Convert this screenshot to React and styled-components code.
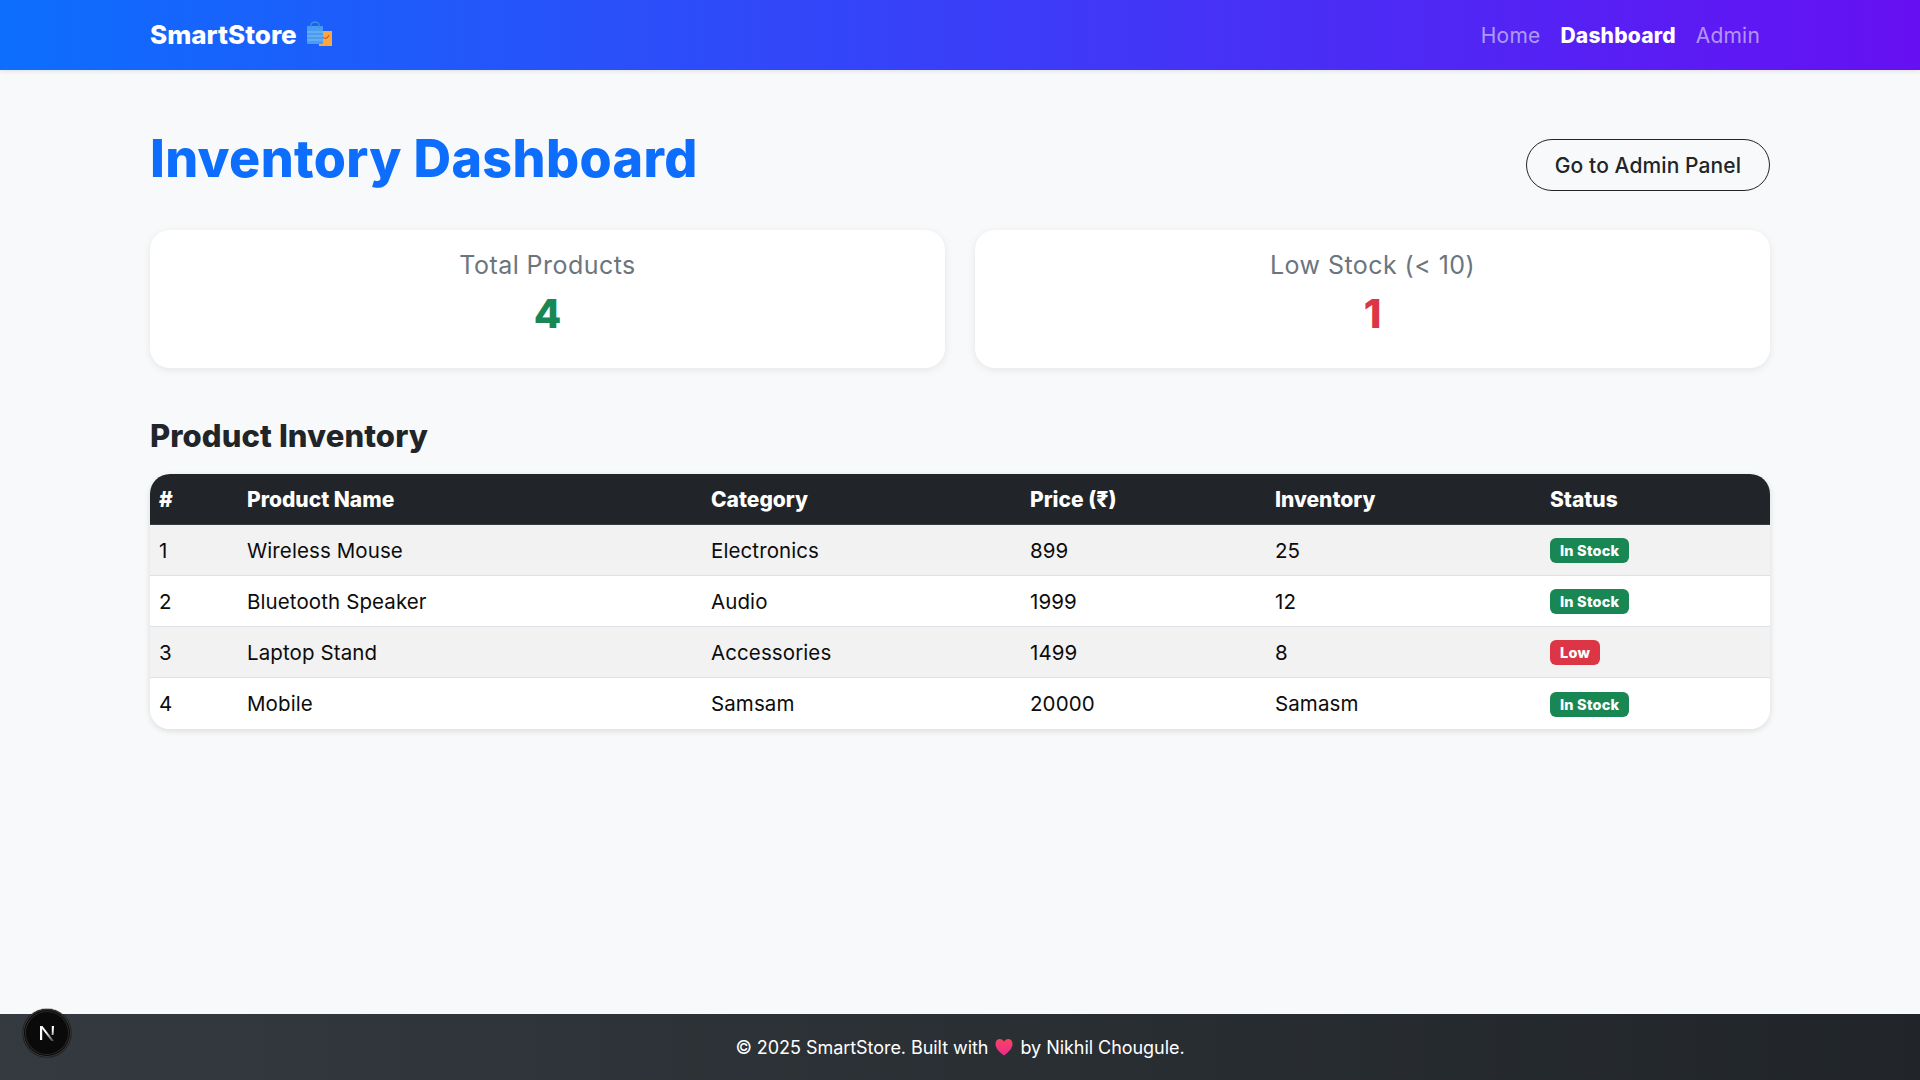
import React from 'react'
import styled, { createGlobalStyle } from 'styled-components'

const GlobalStyle = createGlobalStyle`
  html, body {
    margin: 0;
    padding: 0;
    background: #f8f9fa;
    color: #212529;
    font-family: Inter, "Noto Sans", "Liberation Sans", sans-serif;
  }
  * { box-sizing: border-box; }
`

const Page = styled.div`
  min-height: 100vh;
  display: flex;
  flex-direction: column;
  position: relative;
`

const Navbar = styled.nav`
  height: 70px;
  flex-shrink: 0;
  padding: 0 150px;
  display: flex;
  align-items: center;
  justify-content: space-between;
  background: linear-gradient(90deg, #0d6efd, #6610f2);
  box-shadow: 0 2px 4px rgba(0, 0, 0, 0.08);
`

const Brand = styled.a`
  display: flex;
  align-items: center;
  gap: 9px;
  margin-top: -2px;
  color: #fff;
  font-size: 26px;
  font-weight: 800;
`

const NavLinks = styled.div`
  display: flex;
  gap: 20px;
  padding-right: 10px;
`

const NavLink = styled.a`
  font-size: 21px;
  letter-spacing: 0.2px;
  font-weight: ${p => (p.$active ? 800 : 400)};
  color: ${p => (p.$active ? '#fff' : 'rgba(255, 255, 255, 0.55)')};
`

const Main = styled.main`
  flex: 1;
  padding: 53px 150px 0;
`

const TitleRow = styled.div`
  display: flex;
  align-items: flex-start;
  justify-content: space-between;
  margin-bottom: 35px;
`

const Title = styled.h1`
  margin: 0;
  font-size: 52px;
  line-height: 72px;
  font-weight: 800;
  letter-spacing: 0.35px;
  color: #0d6efd;
`

const OutlineButton = styled.button`
  margin-top: 16px;
  height: 52px;
  width: 244px;
  border: 1px solid #212529;
  border-radius: 26px;
  background: transparent;
  color: #212529;
  font: 500 21px Inter, sans-serif;
  letter-spacing: 0.1px;
`

const Cards = styled.div`
  display: grid;
  grid-template-columns: 1fr 1fr;
  gap: 30px;
  margin-bottom: 49px;
`

const Card = styled.div`
  height: 138px;
  padding-top: 18px;
  border-radius: 20px;
  background: #fff;
  box-shadow: 0 2px 8px rgba(0, 0, 0, 0.08);
  text-align: center;
`

const CardLabel = styled.div`
  font-size: 25px;
  line-height: 34px;
  letter-spacing: 0.45px;
  color: #6c757d;
`

const CardValue = styled.div`
  margin-top: 2px;
  font-size: 40px;
  line-height: 60px;
  font-weight: 800;
  color: ${p => p.$color};
`

const SectionTitle = styled.h2`
  margin: 0 0 19px;
  font-size: 31px;
  line-height: 38px;
  font-weight: 800;
  letter-spacing: 0.1px;
  color: #212529;
`

const Table = styled.table`
  width: 100%;
  table-layout: fixed;
  border-collapse: separate;
  border-spacing: 0;
  border-radius: 20px;
  overflow: hidden;
  background: #fff;
  box-shadow: 0 2px 6px rgba(0, 0, 0, 0.12);
`

const HeadCell = styled.th`
  height: 51px;
  padding: 0 9px;
  text-align: left;
  font-size: 21px;
  font-weight: 800;
  color: #fff;
  background: #212529;
  border-bottom: 1px solid #373b3e;
`

const Row = styled.tr`
  background: ${p => (p.$striped ? '#f2f2f2' : '#fff')};
`

const Cell = styled.td`
  height: 51px;
  padding: 0 9px;
  font-size: 20.5px;
  letter-spacing: 0.1px;
  color: #0c0c0c;
  border-bottom: ${p => (p.$last ? 'none' : '1px solid #dee2e6')};
`

const Badge = styled.span`
  display: inline-block;
  height: 25px;
  padding: 0 10px;
  border-radius: 6px;
  font-size: 14.5px;
  font-weight: 800;
  line-height: 25px;
  letter-spacing: 0.2px;
  color: #fff;
  vertical-align: middle;
  background: ${p => p.$color};
`

const Footer = styled.footer`
  height: 66px;
  flex-shrink: 0;
  display: flex;
  align-items: center;
  justify-content: center;
  gap: 7px;
  background: linear-gradient(90deg, #343a40, #212529);
  color: #fff;
  font-size: 18px;
  letter-spacing: -0.05px;
`

const DevBadge = styled.div`
  position: absolute;
  left: 23px;
  bottom: 23px;
  width: 48px;
  height: 48px;
  display: flex;
  align-items: center;
  justify-content: center;
  border-radius: 50%;
  background: #0a0a0a;
  box-shadow: 0 0 0 1px #3a3a3a inset, 0 0 0 2px #0a0a0a inset, 0 0 0 3px #2a2a2a inset, 0 0 0 1px rgba(0, 0, 0, 0.3);
`

const BagIcon = () => (
  <svg width="26" height="26" viewBox="0 0 26 26">
    <rect x="13" y="10" width="13" height="15" fill="#f9a83d" />
    <path d="M16 13c0 5 5 6 7 1" fill="none" stroke="#e2533a" strokeWidth="1.2" />
    <rect x="1" y="5" width="16" height="18" rx="1" fill="#4a9cf0" />
    <path d="M1 11h16M1 15h16M1 19h16" stroke="#7cbcf5" strokeWidth="1" />
    <path d="M5 7V4a4 3 0 0 1 8 0v3" fill="none" stroke="#3f93dc" strokeWidth="1.3" />
  </svg>
)

const HeartIcon = () => (
  <svg width="18" height="18" viewBox="0 0 18 18">
    <defs>
      <linearGradient id="heart" x1="0" y1="0" x2="0" y2="1">
        <stop offset="0" stopColor="#f4455f" />
        <stop offset="1" stopColor="#f0288f" />
      </linearGradient>
    </defs>
    <path d="M9 17.500C3.500 13.500 .5 10 .5 5.800 .5 2.800 2.500 1 4.800 1 6.600 1 8.100 2 9 3.800 9.900 2 11.400 1 13.200 1c2.300 0 4.300 1.800 4.300 4.800C17.500 10 14.500 13.500 9 17.500z" fill="url(#heart)" />
  </svg>
)

const products = [
  { id: 1, name: 'Wireless Mouse', category: 'Electronics', price: 899, inventory: 25, low: false },
  { id: 2, name: 'Bluetooth Speaker', category: 'Audio', price: 1999, inventory: 12, low: false },
  { id: 3, name: 'Laptop Stand', category: 'Accessories', price: 1499, inventory: 8, low: true },
  { id: 4, name: 'Mobile', category: 'Samsam', price: 20000, inventory: 'Samasm', low: false },
]

const columns = [88, 464, 319, 245, 275, 229]

export default function App() {
  return (
    <Page>
      <GlobalStyle />
      <Navbar>
        <Brand>SmartStore <BagIcon /></Brand>
        <NavLinks>
          <NavLink>Home</NavLink>
          <NavLink $active>Dashboard</NavLink>
          <NavLink>Admin</NavLink>
        </NavLinks>
      </Navbar>
      <Main>
        <TitleRow>
          <Title>Inventory Dashboard</Title>
          <OutlineButton>Go to Admin Panel</OutlineButton>
        </TitleRow>
        <Cards>
          <Card>
            <CardLabel>Total Products</CardLabel>
            <CardValue $color="#198754">4</CardValue>
          </Card>
          <Card>
            <CardLabel>Low Stock (&lt; 10)</CardLabel>
            <CardValue $color="#dc3545">1</CardValue>
          </Card>
        </Cards>
        <SectionTitle>Product Inventory</SectionTitle>
        <Table>
          <colgroup>
            {columns.map((w, i) => <col key={i} style={{ width: w }} />)}
          </colgroup>
          <thead>
            <tr>
              <HeadCell>#</HeadCell>
              <HeadCell>Product Name</HeadCell>
              <HeadCell>Category</HeadCell>
              <HeadCell>Price (₹)</HeadCell>
              <HeadCell>Inventory</HeadCell>
              <HeadCell>Status</HeadCell>
            </tr>
          </thead>
          <tbody>
            {products.map((p, i) => {
              const last = i === products.length - 1
              return (
                <Row key={p.id} $striped={i % 2 === 0}>
                  <Cell $last={last}>{p.id}</Cell>
                  <Cell $last={last}>{p.name}</Cell>
                  <Cell $last={last}>{p.category}</Cell>
                  <Cell $last={last}>{p.price}</Cell>
                  <Cell $last={last}>{p.inventory}</Cell>
                  <Cell $last={last}>
                    <Badge $color={p.low ? '#dc3545' : '#198754'}>{p.low ? 'Low' : 'In Stock'}</Badge>
                  </Cell>
                </Row>
              )
            })}
          </tbody>
        </Table>
      </Main>
      <Footer>
        <span>© 2025 SmartStore. Built with</span>
        <HeartIcon />
        <span>by Nikhil Chougule.</span>
      </Footer>
      <DevBadge>
        <svg width="18" height="18" viewBox="0 0 18 18">
          <defs>
            <linearGradient id="nfade" x1="0" y1="0" x2="1" y2="1">
              <stop offset="0.4" stopColor="#fff" />
              <stop offset="1" stopColor="#fff" stopOpacity="0.2" />
            </linearGradient>
          </defs>
          <path d="M2 2h2.200v14H2z" fill="#fff" />
          <path d="M2 2h2.400L16 17h-2.600z" fill="url(#nfade)" />
          <path d="M13.800 2H16v9h-2.200z" fill="url(#nfade)" />
        </svg>
      </DevBadge>
    </Page>
  )
}
